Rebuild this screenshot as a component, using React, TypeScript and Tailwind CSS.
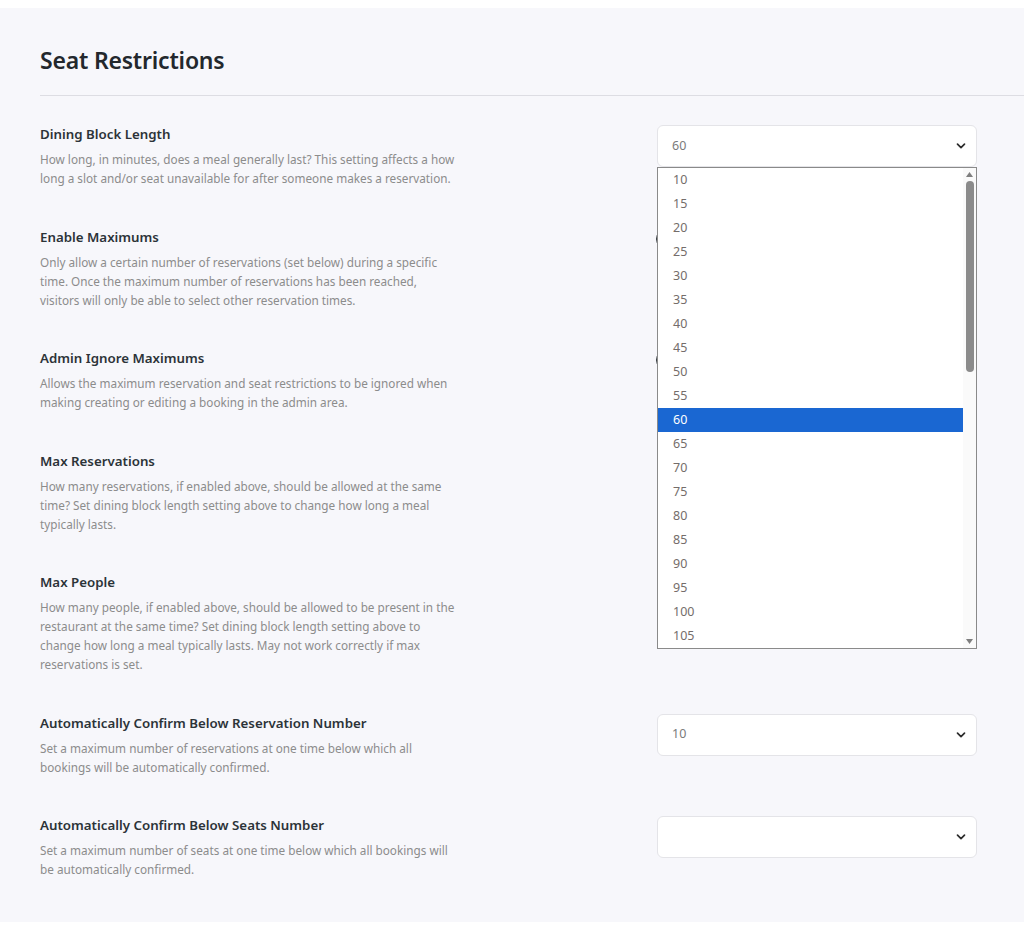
import { useState } from "react";

type Row = {
  title: string;
  desc: string;
  control: "select" | "toggle";
  value?: string;
};

const rows: Row[] = [
  {
    title: "Dining Block Length",
    desc: "How long, in minutes, does a meal generally last? This setting affects a how long a slot and/or seat unavailable for after someone makes a reservation.",
    control: "select",
    value: "60",
  },
  {
    title: "Enable Maximums",
    desc: "Only allow a certain number of reservations (set below) during a specific time. Once the maximum number of reservations has been reached, visitors will only be able to select other reservation times.",
    control: "toggle",
  },
  {
    title: "Admin Ignore Maximums",
    desc: "Allows the maximum reservation and seat restrictions to be ignored when making creating or editing a booking in the admin area.",
    control: "toggle",
  },
  {
    title: "Max Reservations",
    desc: "How many reservations, if enabled above, should be allowed at the same time? Set dining block length setting above to change how long a meal typically lasts.",
    control: "select",
    value: "",
  },
  {
    title: "Max People",
    desc: "How many people, if enabled above, should be allowed to be present in the restaurant at the same time? Set dining block length setting above to change how long a meal typically lasts. May not work correctly if max reservations is set.",
    control: "select",
    value: "",
  },
  {
    title: "Automatically Confirm Below Reservation Number",
    desc: "Set a maximum number of reservations at one time below which all bookings will be automatically confirmed.",
    control: "select",
    value: "10",
  },
  {
    title: "Automatically Confirm Below Seats Number",
    desc: "Set a maximum number of seats at one time below which all bookings will be automatically confirmed.",
    control: "select",
    value: "",
  },
];

const options = [10, 15, 20, 25, 30, 35, 40, 45, 50, 55, 60, 65, 70, 75, 80, 85, 90, 95, 100, 105];

function Chevron() {
  return (
    <svg width="12" height="8" viewBox="0 0 12 8" fill="none">
      <path d="M2.5 2.2l3.5 3.5 3.5-3.5" stroke="#2c2c2c" strokeWidth="1.7" strokeLinecap="round" strokeLinejoin="round" />
    </svg>
  );
}

function SelectBox({ value, open }: { value: string; open: boolean }) {
  return (
    <div className="relative w-[320px]">
      <div className="flex h-[42px] items-center justify-between rounded-md border border-[#e4e4e8] bg-white pl-[14px] pr-[9px] text-[12.5px] text-[#7b7b7b]">
        <span>{value}</span>
        <Chevron />
      </div>
      {open && (
        <div className="absolute left-0 top-[42px] z-10 flex w-[320px] border border-[#8a8a8a] bg-white">
          <ul className="flex-1">
            {options.map((o) => (
              <li
                key={o}
                className={`flex h-6 items-center pl-[15px] text-[12.5px] ${
                  String(o) === value ? "bg-[#1a67d2] text-white" : "text-[#746d6a]"
                }`}
              >
                {o}
              </li>
            ))}
          </ul>
          <div className="flex w-[13px] flex-col items-center bg-[#fafafa]">
            <svg width="9" height="8" viewBox="0 0 9 8" className="mt-[3px]">
              <path d="M4.5 1L8 6H1z" fill="#7f7f7f" />
            </svg>
            <div className="mt-[2px] h-[191px] w-[8px] rounded-full bg-[#8b8b8b]" />
            <div className="flex-1" />
            <svg width="9" height="8" viewBox="0 0 9 8" className="mb-[3px]">
              <path d="M1 2h7L4.5 7z" fill="#7f7f7f" />
            </svg>
          </div>
        </div>
      )}
    </div>
  );
}

function Toggle() {
  return (
    <div className="-ml-px flex h-[20px] w-[40px] items-center rounded-full border border-[#2c3338] bg-white px-[3px]">
      <div className="h-[12px] w-[12px] rounded-full bg-[#2c3338]" />
    </div>
  );
}

export default function App() {
  const [openIndex] = useState<number>(0);

  return (
    <div className="min-h-[944px] bg-white pt-2 font-['Noto_Sans','Open_Sans',sans-serif]">
      <div className="bg-[#f7f7fb] pb-[23px]">
        <div className="pl-10 pt-[36px] pb-[19px]">
          <h2 className="text-[23px] font-semibold leading-8 tracking-[-0.2px] text-[#23282d]">Seat Restrictions</h2>
        </div>
        <div className="ml-10 border-t border-[#dddde3]" />
        <div className="pt-[9px]">
          {rows.map((row, i) => (
            <div key={row.title} className="flex items-start justify-between pt-[19px] pb-[19.5px] pl-10 pr-[47px]">
              <div className="w-[416px]">
                <h3 className="text-[13.3px] font-semibold leading-5 text-[#2c3338]">{row.title}</h3>
                <p className="mt-[6px] text-[11.75px] leading-[19px] text-[#8c8c8c]">{row.desc}</p>
              </div>
              {row.control === "select" ? (
                <div className="pt-px">
                  <SelectBox value={row.value ?? ""} open={i === openIndex} />
                </div>
              ) : (
                <div className="w-[320px]">
                  <div className="mt-[2px]">
                    <Toggle />
                  </div>
                </div>
              )}
            </div>
          ))}
        </div>
      </div>
    </div>
  );
}
